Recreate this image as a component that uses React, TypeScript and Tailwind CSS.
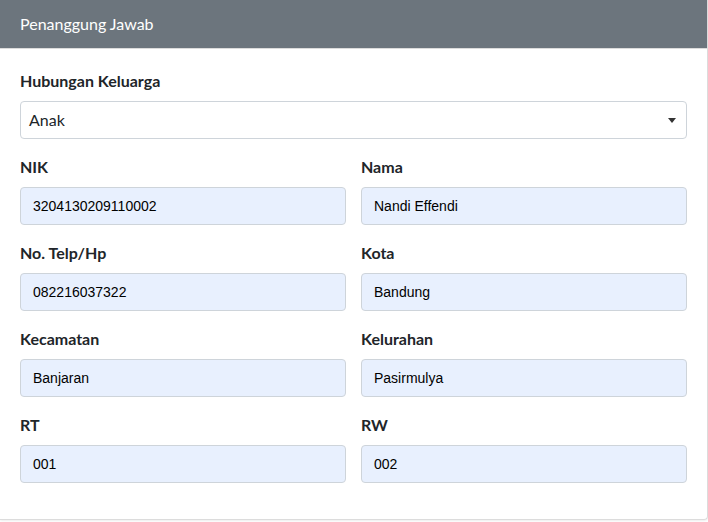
const fields: [string, string][] = [
  ['NIK', '3204130209110002'],
  ['Nama', 'Nandi Effendi'],
  ['No. Telp/Hp', '082216037322'],
  ['Kota', 'Bandung'],
  ['Kecamatan', 'Banjaran'],
  ['Kelurahan', 'Pasirmulya'],
  ['RT', '001'],
  ['RW', '002'],
];

const Field = ({ label, value }: { label: string; value: string }) => (
  <div className="mb-4">
    <label className="mb-2 block text-base font-bold leading-6 text-[#212529]">
      {label}
    </label>
    <div className="flex h-[38px] items-center rounded border border-[#ced4da] bg-[#e8f0fe] px-3 font-['Liberation_Sans',sans-serif] text-[14px] text-black">
      {value}
    </div>
  </div>
);

const App = () => {
  return (
    <div className="h-[522px] w-[708px] bg-white font-['Lato',sans-serif]">
      <div className="w-[708px] overflow-hidden rounded-br border-r border-b border-[#dcdcdc] shadow-[0_0_3px_rgba(0,0,0,0.15)]">
        <div className="h-[49px] border-b border-[#dcdcdc] bg-[#6c757d] px-5 py-3 text-base leading-6 text-white">
          Penanggung Jawab
        </div>
        <div className="p-5">
          <div className="mb-4">
            <label className="mb-2 block text-base font-bold leading-6 text-[#212529]">
              Hubungan Keluarga
            </label>
            <div className="flex h-[38px] items-center justify-between rounded border border-[#ced4da] bg-white pr-[10px] pl-2 text-base text-[#212529]">
              <span>Anak</span>
              <svg width="8" height="5" viewBox="0 0 8 5">
                <path d="M0 0h8L4 5z" fill="#333" />
              </svg>
            </div>
          </div>
          <div className="grid grid-cols-2 gap-x-[15px]">
            {fields.map(([l, v]) => (
              <Field key={l} label={l} value={v} />
            ))}
          </div>
        </div>
      </div>
    </div>
  );
};

export default App;
